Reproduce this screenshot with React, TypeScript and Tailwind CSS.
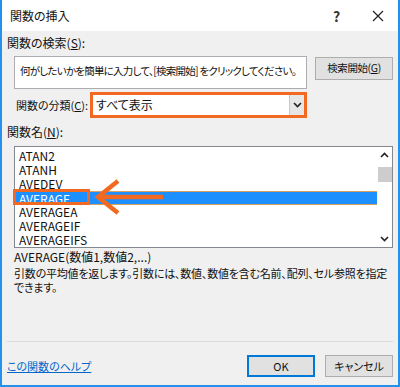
import React from "react";

const items = [
  "ATAN2",
  "ATANH",
  "AVEDEV",
  "AVERAGE",
  "AVERAGEA",
  "AVERAGEIF",
  "AVERAGEIFS",
];

function Chevron({ up }: { up?: boolean }) {
  return (
    <svg width="9" height="6" viewBox="0 0 9 6">
      <path
        d={up ? "M1 5 L4.5 1.5 L8 5" : "M1 1 L4.5 4.5 L8 1"}
        fill="none"
        stroke="#222"
        strokeWidth="1.6"
      />
    </svg>
  );
}

export default function App() {
  return (
    <div
      className="
        w-[400px] h-[387px] flex flex-col
        border-x-2 border-b-2 border-[#2491ec]
        bg-[#f0f0f0] text-[11px] text-[#111]
        font-['Noto_Sans_CJK_JP',sans-serif]
        [font-feature-settings:'palt']
        overflow-hidden
      "
    >
      {/* Title bar */}
      <div className="h-[31px] shrink-0 bg-white flex items-center pl-[8px]">
        <span className="flex-1 leading-none text-[12px]">関数の挿入</span>
        <span className="w-[25px] text-[14px] leading-none font-bold text-[#333]">?</span>
        <div className="w-[40px] flex justify-center">
          <svg width="12" height="12" viewBox="0 0 12 12">
            <path d="M1 1 L11 11 M11 1 L1 11" stroke="#222" strokeWidth="1.2" />
          </svg>
        </div>
      </div>

      {/* Body */}
      <div className="flex-1 flex flex-col px-[5px]">
        <div className="mt-[5px] h-[14px] leading-[14px] text-[12px]">
          関数の検索(<span className="underline">S</span>):
        </div>

        <div className="mt-[6px] flex items-start pl-[7px]">
          <div className="w-[293px] h-[33px] bg-white border border-[#abadb3] pl-[5px] pt-[7px] leading-[14px] whitespace-nowrap overflow-hidden text-[10.5px] tracking-[-0.75px]">
            何がしたいかを簡単に入力して、[検索開始] をクリックしてください。
          </div>
          <button className="ml-[8px] mt-[1px] w-[78px] h-[23px] bg-[#e1e1e1] border border-[#adadad] leading-none whitespace-nowrap text-[10.5px] tracking-[-0.4px]">
            検索開始(<span className="underline">G</span>)
          </button>
        </div>

        <div className="mt-[3px] flex items-center">
          <span className="w-[83px] pl-[9px] leading-[14px] whitespace-nowrap">
            関数の分類(<span className="underline">C</span>):
          </span>
          <div className="w-[217px] h-[26px] border-[3px] border-[#f26a21] bg-white flex items-stretch">
            <span className="flex-1 pl-[3px] leading-[20px] text-[12px]">すべて表示</span>
            <div className="w-[15px] bg-[#e6e6e6] border-l border-[#c8c8c8] flex items-center justify-center">
              <Chevron />
            </div>
          </div>
        </div>

        <div className="mt-[7px] h-[14px] leading-[14px] text-[12px]">
          関数名(<span className="underline">N</span>):
        </div>

        {/* Function list */}
        <div className="relative mt-[7px] ml-[7px] w-[379px] h-[102px] bg-white border border-[#828790] flex">
          <div className="flex-1 pt-[2px] text-[12px]">
            {items.map((name) => (
              <div
                key={name}
                className={
                  name === "AVERAGE"
                    ? "h-[14px] leading-[14px] pl-[4px] bg-[#1e8fff] text-white border border-[#d9a060] -mx-px"
                    : "h-[14px] leading-[14px] pl-[4px]"
                }
              >
                {name}
              </div>
            ))}
          </div>
          <div className="w-[15px] flex flex-col items-center bg-white">
            <div className="h-[16px] flex items-center justify-center">
              <Chevron up />
            </div>
            <div className="w-[14px] h-[15px] bg-[#cdcdcd] mt-[4px]" />
            <div className="flex-1" />
            <div className="h-[16px] flex items-center justify-center">
              <Chevron />
            </div>
          </div>

          {/* Orange callouts */}
          <div className="absolute left-[-2px] top-[42px] w-[77px] h-[16px] border-[3px] border-[#f26a21]" />
          <svg
            className="absolute left-[78px] top-[31px]"
            width="72"
            height="38"
            viewBox="0 0 72 38"
          >
            <path d="M25 3 L5 19 L25 35" fill="none" stroke="#f26a21" strokeWidth="4.5" />
            <path d="M7 19 L70 19" stroke="#f26a21" strokeWidth="4.5" />
          </svg>
        </div>

        <div className="mt-[2px] ml-[7px] h-[14px] leading-[14px] text-[12px]">
          AVERAGE(数値1,数値2,...)
        </div>
        <div className="mt-[2px] ml-[7px] leading-[14px] whitespace-nowrap tracking-[-0.2px]">
          引数の平均値を返します。引数には、数値、数値を含む名前、配列、セル参照を指定
          <br />
          できます。
        </div>

        <div className="flex-1" />
        <div className="h-px bg-[#dadada]" />

        <div className="h-[43px] flex items-start pt-[13px]">
          <span className="flex-1 text-[#0066cc] underline leading-[22px]">
            この関数のヘルプ
          </span>
          <button className="w-[68px] h-[22px] bg-[#e1e1e1] border-2 border-[#0078d7] leading-none">
            OK
          </button>
          <button className="ml-[10px] w-[68px] h-[22px] bg-[#e1e1e1] border border-[#adadad] leading-none">
            キャンセル
          </button>
        </div>
      </div>
    </div>
  );
}
